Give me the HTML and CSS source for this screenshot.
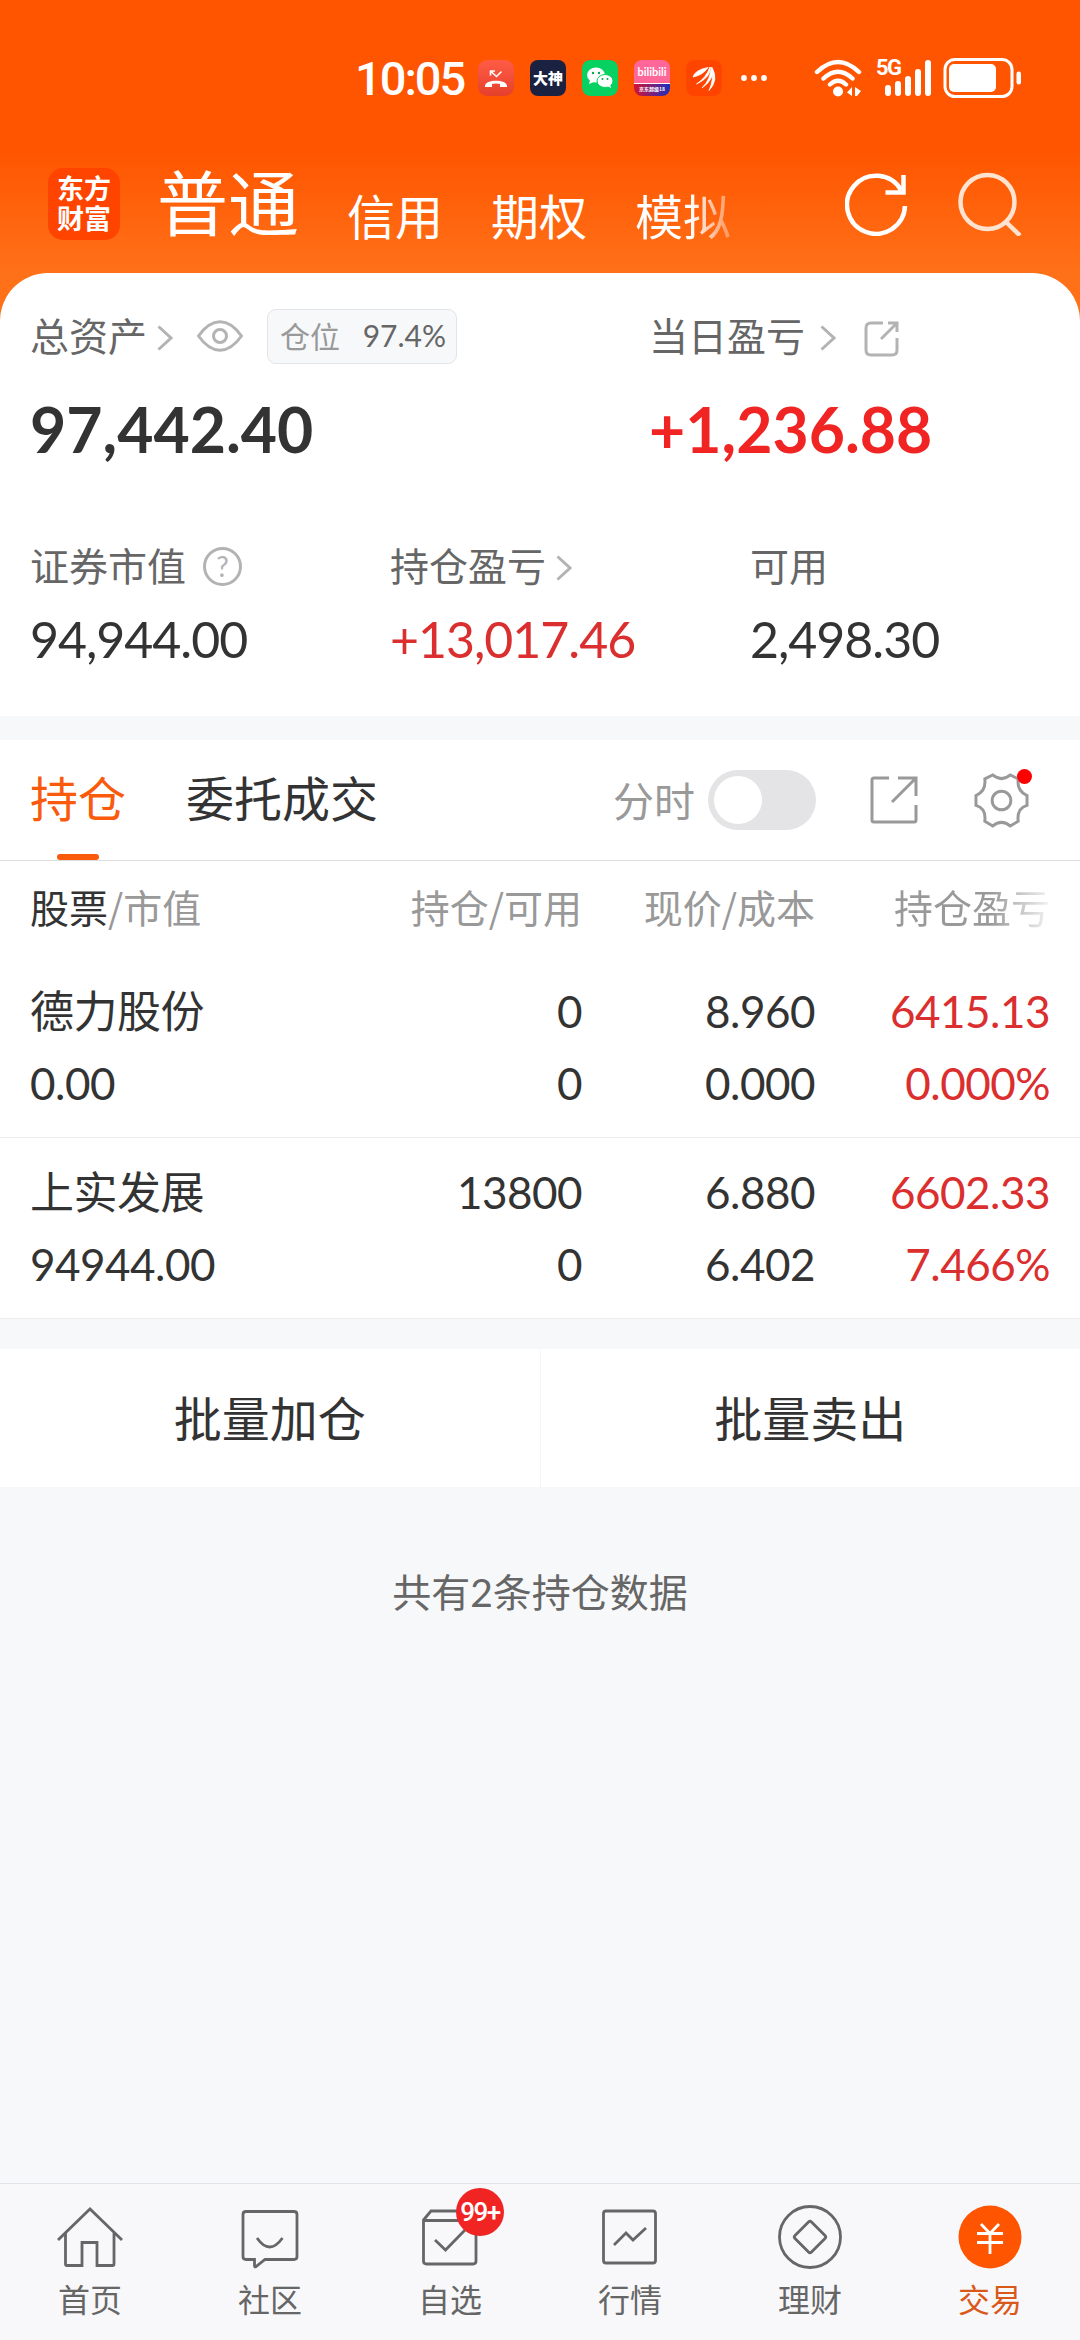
FILE: index.html
```html
<!DOCTYPE html>
<html lang="zh-CN">
<head>
    <meta charset="UTF-8">
    <meta name="viewport" content="width=device-width, initial-scale=1.0">
    <title>交易</title>
    <link rel="stylesheet" href="styles.css">
</head>
<body>
    <header class="header">
        <div class="status-bar">
            <span class="time">10:05</span>
            <div class="app-icons">
                <svg class="app-icon" viewBox="0 0 36 36">
                    <defs>
                        <linearGradient id="call" x1="0" y1="0" x2="0" y2="1"><stop offset="0" stop-color="#ff5c46"/><stop offset="1" stop-color="#e5402c"/></linearGradient>
                    </defs>
                    <rect width="36" height="36" rx="9" fill="url(#call)"/>
                    <path d="M7 26c0-7 22-7 22 0v1h-7v-3q-4-1-8 0v3H7z" fill="#fff"/>
                    <path d="M12.500 15.500v-4.500h4.500M13 11.500l5.500 5 5-5" fill="none" stroke="#fff" stroke-width="1.600"/>
                </svg>
                <div class="app-icon dashen">大神</div>
                <svg class="app-icon" viewBox="0 0 36 36">
                    <rect width="36" height="36" rx="8" fill="#07d160"/>
                    <ellipse cx="14" cy="15" rx="9" ry="7.500" fill="#fff"/>
                    <path d="M8 20l-1 4 5-2z" fill="#fff"/>
                    <ellipse cx="23" cy="21" rx="8" ry="6.500" fill="#fff" stroke="#07d160"/>
                    <path d="M25 26l4 2-1-4z" fill="#fff"/>
                    <g fill="#07a650"><circle cx="11" cy="13" r="1.200"/><circle cx="17" cy="13" r="1.200"/><circle cx="20.500" cy="19" r="1"/><circle cx="25.500" cy="19" r="1"/></g>
                </svg>
                <div class="app-icon bili"><span>bilibili</span><small>京东超级18</small></div>
                <svg class="app-icon" viewBox="0 0 36 36">
                    <rect width="36" height="36" rx="8" fill="#ff4400"/>
                    <path d="M7 17Q9 10 22 7.500Q17 15 7 17zM10.500 24Q20 18 24 7Q25.500 17 10.500 24zM16 28Q25 19 25 7Q30 18 16 28zM23 30.500Q28 20 26 7.500Q33 20 23 30.500z" fill="#fff" stroke="#fff" stroke-width=".8"/>
                </svg>
            </div>
            <svg class="more" viewBox="0 0 28 8" fill="#fff"><circle cx="4" cy="4" r="2.900"/><circle cx="14" cy="4" r="2.900"/><circle cx="24" cy="4" r="2.900"/></svg>
            <svg class="wifi" viewBox="0 0 48 38">
                <g fill="none" stroke="#fff" stroke-width="4.400" stroke-linecap="round"><path d="M3 13Q24-7 45 13M9.500 19.500Q24 6 38.500 19.500M16 25.500Q24 18 32 25.500"/></g>
                <circle cx="24" cy="32.500" r="5" fill="#fff"/>
                <path d="M38 28v9l-5-3.500zM41 28l6 4-4 5h-2z" fill="#fff"/>
            </svg>
            <div class="signal">
                <span class="network">5G</span>
                <svg viewBox="0 0 56 38" fill="#fff"><rect x="9" y="26" width="6" height="11" rx="3"/><rect x="19" y="22" width="6" height="15" rx="3"/><rect x="29" y="17" width="6" height="20" rx="3"/><rect x="39" y="10" width="6" height="27" rx="3"/><rect x="49" y="1" width="6" height="36" rx="3"/></svg>
            </div>
            <svg class="battery" viewBox="0 0 80 42">
                <rect x="2" y="2.500" width="67" height="37" rx="10" fill="none" stroke="#fff" stroke-width="3"/>
                <rect x="6" y="7" width="47" height="28" rx="5" fill="#fff"/>
                <rect x="73.500" y="14.500" width="4.500" height="13" rx="2.200" fill="#fff"/>
            </svg>
        </div>
        <div class="top-nav">
            <div class="logo">东方财富</div>
            <nav class="accounts">
                <a class="account active">普通</a>
                <a class="account">信用</a>
                <a class="account">期权</a>
                <a class="account fade">模拟</a>
            </nav>
            <svg class="refresh" viewBox="0 0 64 64" fill="none" stroke="#fff" stroke-width="4.500">
                <path d="M60 34A29 29 0 1 1 56 18"/><path d="M58.500 3v17.500H40.500"/>
            </svg>
            <svg class="search" viewBox="0 0 64 64" fill="none" stroke="#ffe3d1" stroke-width="4.500">
                <circle cx="29.500" cy="30" r="27"/><path d="M48 50l14 13.500"/>
            </svg>
        </div>
    </header>

    <section class="assets">
        <div class="summary">
            <div class="total">
                <div class="label">总资产
                    <svg class="arrow" viewBox="0 0 16 26"><path d="M1.500 1.500L14 13 1.500 24.500"/></svg>
                    <svg class="eye" viewBox="0 0 46 32"><path d="M1.500 16C15-3 31-3 44.500 16C31 35 15 35 1.500 16z"/><circle cx="23" cy="16" r="6.500"/></svg>
                    <span class="ratio"><i>仓位</i><b>97.4%</b></span>
                </div>
                <div class="big">97,442.40</div>
            </div>
            <div class="today">
                <div class="label">当日盈亏
                    <svg class="arrow" viewBox="0 0 16 26"><path d="M1.500 1.500L14 13 1.500 24.500"/></svg>
                    <svg class="share-small" viewBox="0 0 36 36"><path d="M19 2H7Q2 2 2 7v22q0 5 5 5h21q5 0 5-5V17M17 18L33 2M24 2h9v9"/></svg>
                </div>
                <div class="big red">+1,236.88</div>
            </div>
        </div>
        <div class="details">
            <div>
                <div class="label">证券市值
                    <span class="help">?</span>
                </div>
                <div class="value">94,944.00</div>
            </div>
            <div>
                <div class="label">持仓盈亏
                    <svg class="arrow" viewBox="0 0 16 26"><path d="M1.500 1.500L14 13 1.500 24.500"/></svg>
                </div>
                <div class="value red">+13,017.46</div>
            </div>
            <div>
                <div class="label">可用</div>
                <div class="value">2,498.30</div>
            </div>
        </div>
    </section>

    <section class="holdings">
        <div class="tabs">
            <a class="tab active">持仓</a>
            <a class="tab">委托成交</a>
            <div class="tools">
                <span class="switch-label">分时</span>
                <span class="switch"></span>
                <svg class="share" viewBox="0 0 48 48"><path d="M19 2H4Q2 2 2 4v40q0 2 2 2h40q2 0 2-2V29M22 26L46 2M28 2h18v18"/></svg>
                <div class="settings">
                    <svg viewBox="0 0 56 56"><path d="M19 2C25 7 31 7 37 2L45 6C44 14 47 20 54 23V33C47 35 44 41 45 49L37 54C31 49 25 49 19 54L11 49C12 41 9 35 2 33V23C9 20 12 14 11 6z"/><circle cx="28" cy="28" r="9.500"/></svg>
                    <span class="dot"></span>
                </div>
            </div>
        </div>
        <div class="row head">
            <span><em>股票</em>/市值</span>
            <span>持仓/可用</span>
            <span>现价/成本</span>
            <span class="fade-out">持仓盈亏</span>
        </div>
        <div class="row">
            <span>德力股份</span><span>0</span><span>8.960</span><span class="red">6415.13</span>
            <span>0.00</span><span>0</span><span>0.000</span><span class="red">0.000%</span>
        </div>
        <div class="row">
            <span>上实发展</span><span>13800</span><span>6.880</span><span class="red">6602.33</span>
            <span>94944.00</span><span>0</span><span>6.402</span><span class="red">7.466%</span>
        </div>
    </section>

    <div class="batch">
        <button>批量加仓</button>
        <button>批量卖出</button>
    </div>
    <p class="count">共有2条持仓数据</p>

    <footer class="tabbar">
        <a class="item">
            <svg viewBox="0 0 72 72"><path d="M4 39L36 8l32 31M11.500 32v31q0 1.500 1.500 1.500h15V41.500h15v23h15.500q1.500 0 1.500-1.500V32"/></svg>
            首页
        </a>
        <a class="item">
            <svg viewBox="0 0 72 72"><path d="M12 10.500h48q3 0 3 3v42q0 3-3 3H31l-9 7q-1.500 1-1.500-1v-6H12q-3 0-3-3v-42q0-3 3-3zM23 37q12.500 18 25.500 0"/></svg>
            社区
        </a>
        <a class="item">
            <svg viewBox="0 0 72 72"><path d="M9.500 19L17 10h37l8 9v41q0 3-3 3H12.500q-3 0-3-3zM9.500 19.500H62M21 39l10.500 10L51 29"/></svg>
            <span class="badge">99+</span>
            自选
        </a>
        <a class="item">
            <svg viewBox="0 0 72 72"><rect x="9.500" y="10" width="52" height="52" rx="2.500"/><path d="M20 44l12-12 7 7 13-12"/></svg>
            行情
        </a>
        <a class="item">
            <svg viewBox="0 0 72 72"><circle cx="36" cy="36" r="30.500"/><path d="M34.500 21q1.500-1.500 3 0l13.500 13.500q1.500 1.500 0 3L37.500 51q-1.500 1.500-3 0L21 37.500q-1.500-1.500 0-3z"/></svg>
            理财
        </a>
        <a class="item current">
            <svg viewBox="0 0 72 72"><circle class="coin" cx="36" cy="36" r="31.500"/><path class="yen" d="M27 23l9 9.500 9-9.500M23 32.500h26M23 41.500h26M36 32v21"/></svg>
            交易
        </a>
    </footer>
</body>
</html>
```
FILE: styles.css
```css
* {
    box-sizing: border-box;
}

body {
    margin: 0;
    min-height: 2340px;
    display: flex;
    flex-direction: column;
    background: #f7f8fa;
    color: #333;
    font-family: Lato, "Noto Sans CJK SC", sans-serif;
}

svg {
    display: block;
    flex: none;
}

.red {
    color: #db2e2e;
}

/* Header */
.header {
    height: 321px;
    background: linear-gradient(#ff5500 150px, #ff7119 273px);
    color: #fff;
}

.status-bar {
    height: 156px;
    display: flex;
    align-items: center;
    padding-left: 355px;
}

.time {
    width: 123px;
    font: 500 47px/1 Roboto, sans-serif;
    letter-spacing: -2px;
}

.app-icons {
    display: flex;
    gap: 16px;
}

.app-icon {
    width: 36px;
    height: 36px;
    border-radius: 8px;
    overflow: hidden;
}

.dashen {
    background: #1b2140;
    font: 900 15px/36px "Noto Sans CJK SC", sans-serif;
    text-align: center;
}

.bili {
    display: flex;
    flex-direction: column;
    background: linear-gradient(#ff6699 23px, #fff 23px, #fff 24px, transparent 24px), linear-gradient(90deg, #d81232, #1b2fc0);
    text-align: center;
}

.bili span {
    font: 700 11px/23px Lato, sans-serif;
}

.bili small {
    font: 700 5px/12px "Noto Sans CJK SC", sans-serif;
    white-space: nowrap;
}

.more {
    width: 28px;
    margin-left: 18px;
}

.wifi {
    width: 48px;
    margin-left: 46px;
}

.signal {
    display: flex;
    width: 56px;
    margin-left: 14px;
}

.signal svg {
    width: 56px;
}

.network {
    width: 0;
    font: 700 22px/18px Roboto, sans-serif;
    letter-spacing: -1.5px;
}

.battery {
    width: 80px;
    margin-left: 11px;
}

.top-nav {
    height: 96px;
    display: flex;
    align-items: center;
    padding-left: 48px;
}

.logo {
    width: 72px;
    height: 72px;
    padding: 5px 9px 0;
    border-radius: 15px;
    background: #ff4400;
    font: 700 27px/30px "Noto Sans CJK SC", sans-serif;
}

.accounts {
    width: 725px;
    height: 96px;
    display: flex;
    align-items: flex-start;
    padding-left: 37px;
    font-size: 48px;
    line-height: 121px;
}

.account {
    margin-right: 48px;
}

.account.active {
    font-size: 71px;
    line-height: 94px;
}

.fade {
    background: linear-gradient(90deg, #fff 55px, #ff7a30 105px);
    background-clip: text;
    color: transparent;
}

.refresh {
    width: 64px;
}

.search {
    width: 64px;
    margin-left: 49px;
}

/* Assets */
.assets {
    height: 443px;
    margin-top: -48px;
    padding: 31px 30px 0;
    border-radius: 48px 48px 0 0;
    background: #fff;
}

.summary {
    display: grid;
    grid-template-columns: 619px 1fr;
    height: 230px;
}

.details {
    display: grid;
    grid-template-columns: 360px 360px 1fr;
}

/* bottom padding lifts the text, the icons are pushed back down */
.label {
    height: 64px;
    display: flex;
    align-items: center;
    padding-bottom: 5px;
    color: #666;
    font-size: 39px;
}

.label svg {
    fill: none;
    stroke: #b3b3b3;
    stroke-width: 3;
}

.label .arrow {
    width: 16px;
    margin: 9px 0 0 10px;
}

.today .label .arrow {
    margin-left: 15px;
}

.eye {
    width: 46px;
    margin: 5px 0 0 24px;
}

.share-small {
    width: 36px;
    margin: 11px 0 0 28px;
}

.ratio {
    width: 190px;
    height: 55px;
    display: flex;
    align-items: center;
    justify-content: space-between;
    margin: 5px 0 0 24px;
    padding: 0 10px 2px 12px;
    border: 1px solid #e3e4e8;
    border-radius: 9px;
    background: #f7f8fa;
    font-size: 30px;
}

.ratio i {
    color: #999;
    font-style: normal;
}

.ratio b {
    font-weight: 400;
}

.big {
    margin-top: 23px;
    font-size: 62.5px;
    font-weight: 700;
    line-height: 76px;
}

.big.red {
    color: #f12424;
}

.help {
    width: 39px;
    height: 39px;
    margin: 5px 0 0 17px;
    border: 3px solid #b3b3b3;
    border-radius: 50%;
    color: #b3b3b3;
    font-size: 28px;
    line-height: 33px;
    text-align: center;
}

.value {
    margin-top: 11px;
    font-size: 50px;
    line-height: 60px;
    letter-spacing: -1px;
}

/* Holdings */
.holdings {
    margin-top: 24px;
    background: #fff;
}

.tabs {
    height: 121px;
    display: flex;
    align-items: center;
    padding: 0 51px 0 30px;
    border-bottom: 1px solid #dcdddf;
    font-size: 48px;
}

.tab {
    position: relative;
    height: 120px;
    line-height: 118px;
    margin-right: 60px;
}

.tab.active {
    color: #f95a0c;
}

.tab.active::after {
    content: "";
    position: absolute;
    bottom: 0;
    left: 27px;
    width: 42px;
    height: 6px;
    border-radius: 3px;
    background: #f95a0c;
}

.tools {
    display: flex;
    align-items: center;
    margin-left: auto;
}

.tools svg {
    fill: none;
    stroke: #999;
    stroke-width: 3;
}

.switch-label {
    padding-bottom: 3px;
    color: #999;
    font-size: 41px;
}

.switch {
    width: 108px;
    height: 60px;
    margin: 0 54px 0 13px;
    padding: 6px;
    border-radius: 30px;
    background: #e4e4e6;
}

.switch::before {
    content: "";
    display: block;
    width: 48px;
    height: 48px;
    border-radius: 50%;
    background: #fff;
}

.share {
    width: 48px;
}

.settings {
    position: relative;
    margin-left: 56px;
}

.settings svg {
    width: 55px;
}

.dot {
    position: absolute;
    top: -4px;
    right: -3px;
    width: 15px;
    height: 15px;
    border-radius: 50%;
    background: #f00;
}

.row {
    display: grid;
    grid-template-columns: 271px 281px 233px 235px;
    grid-auto-rows: 72px;
    align-items: center;
    height: 181px;
    padding: 18px 0 0 30px;
    border-bottom: 1px solid #ececee;
    font-size: 44px;
    letter-spacing: -0.5px;
    line-height: 60px;
}

.row span:not(:nth-child(4n + 1)) {
    text-align: right;
}

.row.head {
    height: 96px;
    padding-top: 9px;
    border: none;
    color: #999;
    font-family: "Noto Sans CJK SC", sans-serif;
    font-size: 39px;
    letter-spacing: 0;
}

.head em {
    color: #333;
    font-style: normal;
}

.fade-out {
    background: linear-gradient(90deg, #999 175px, #fff 243px);
    background-clip: text;
    color: transparent;
}

/* Batch buttons */
.batch {
    height: 138px;
    display: flex;
    margin-top: 30px;
    background: #fff;
}

.batch button {
    flex: 1;
    padding: 0 0 4px;
    border: none;
    background: none;
    color: #333;
    font: 400 48px/1 "Noto Sans CJK SC", sans-serif;
}

.batch button + button {
    border-left: 1px solid #f5f5f7;
}

.count {
    margin: 75px 0 0;
    color: #666;
    font-size: 39px;
    line-height: 60px;
    text-align: center;
}

/* Bottom bar */
.tabbar {
    height: 157px;
    display: flex;
    margin-top: auto;
    border-top: 1px solid #e2e3e6;
    background: #f8f8fb;
}

.item {
    position: relative;
    flex: 1;
    display: flex;
    flex-direction: column;
    align-items: center;
    padding-top: 17px;
    color: #666;
    font-size: 32px;
    line-height: 53px;
}

.item svg {
    width: 72px;
    height: 72px;
    fill: none;
    stroke: #666;
    stroke-width: 2.800;
}

.badge {
    position: absolute;
    top: 4px;
    left: 96px;
    width: 48px;
    height: 48px;
    border-radius: 50%;
    background: #f12424;
    color: #fff;
    font: 500 26px/48px Roboto, sans-serif;
    letter-spacing: -1.500px;
    text-align: center;
}

.current {
    color: #d9591a;
}

.item .coin {
    fill: #ff5500;
    stroke: none;
}

.item .yen {
    stroke: #fff;
}
```
